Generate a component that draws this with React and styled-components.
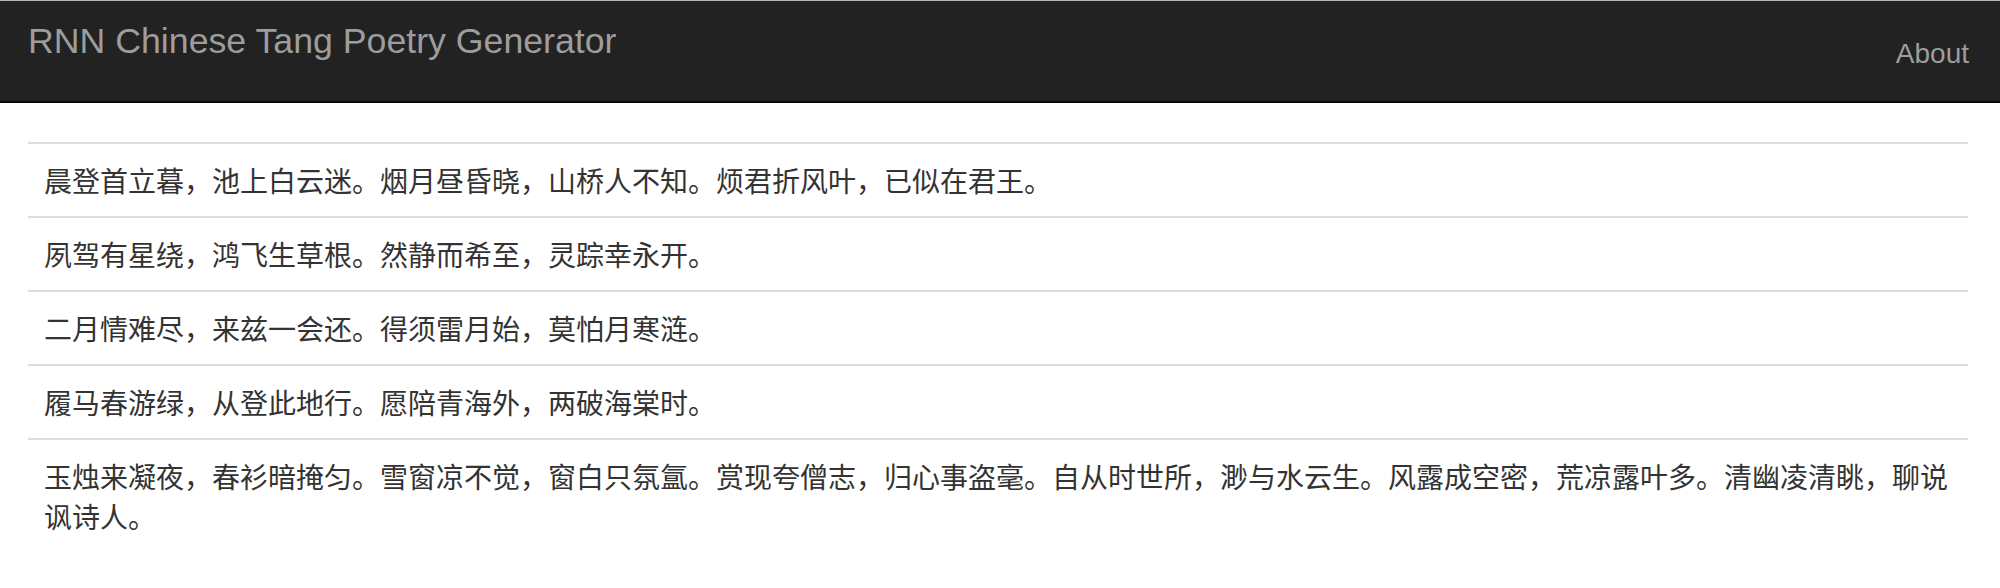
import React from "react";
import styled, { createGlobalStyle } from "styled-components";

const GlobalStyle = createGlobalStyle`
  html, body { margin: 0; padding: 0; background: #fff; }
  body {
    font-family: "Liberation Sans", Arial, "Noto Sans CJK SC", sans-serif;
    color: #333;
  }
  * { box-sizing: border-box; }
`;

const Navbar = styled.nav`
  display: flex;
  justify-content: space-between;
  align-items: flex-start;
  height: 103px;
  background: #222;
  border-top: 1px solid #b4b4b4;
  border-bottom: 2px solid #080808;
  padding: 0 31px 0 28px;
  margin-bottom: 39px;
`;

const Brand = styled.a`
  display: block;
  padding-top: 20px;
  font-size: 35.7px;
  line-height: 40px;
  color: #9d9d9d;
  text-decoration: none;
`;

const NavLink = styled.a`
  display: block;
  padding-top: 33px;
  font-size: 28px;
  line-height: 40px;
  color: #9d9d9d;
  text-decoration: none;
`;

const Container = styled.main`
  padding: 0 32px 0 28px;
`;

const Table = styled.table`
  width: 100%;
  border-collapse: collapse;
  border-spacing: 0;
`;

const Cell = styled.td`
  padding: 16px 16px;
  border-top: 2px solid #ddd;
  font-family: "Noto Sans CJK SC", "Liberation Sans", sans-serif;
  font-size: 28px;
  line-height: 40px;
  color: #333;
  vertical-align: top;
`;

const poems = [
  "晨登首立暮，池上白云迷。烟月昼昏晓，山桥人不知。烦君折风叶，已似在君王。",
  "夙驾有星绕，鸿飞生草根。然静而希至，灵踪幸永开。",
  "二月情难尽，来兹一会还。得须雷月始，莫怕月寒涟。",
  "履马春游绿，从登此地行。愿陪青海外，两破海棠时。",
  "玉烛来凝夜，春衫暗掩匀。雪窗凉不觉，窗白只氛氲。赏现夸僧志，归心事盗毫。自从时世所，渺与水云生。风露成空密，荒凉露叶多。清幽凌清眺，聊说讽诗人。",
];

export default function App() {
  return (
    <>
      <GlobalStyle />
      <Navbar>
        <Brand href="#">RNN Chinese Tang Poetry Generator</Brand>
        <NavLink href="#">About</NavLink>
      </Navbar>
      <Container>
        <Table>
          <tbody>
            {poems.map((p, i) => (
              <tr key={i}>
                <Cell>{p}</Cell>
              </tr>
            ))}
          </tbody>
        </Table>
      </Container>
    </>
  );
}
